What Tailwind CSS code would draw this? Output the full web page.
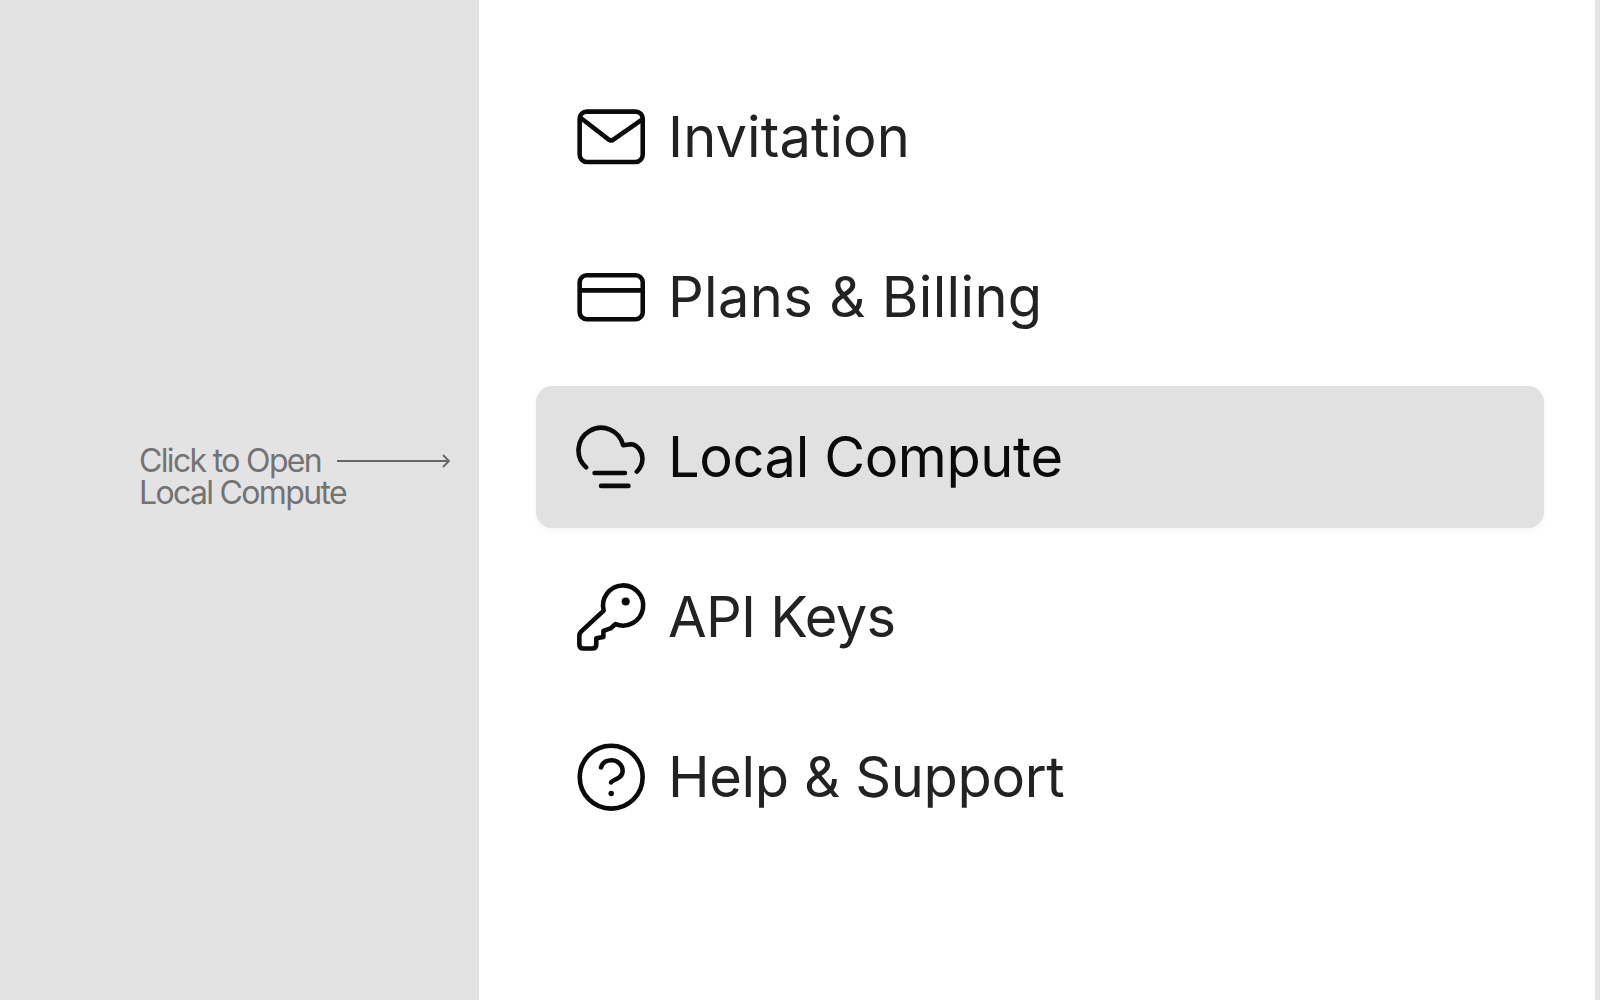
<!DOCTYPE html>
<html lang="en">
<head>
    <meta charset="UTF-8">
    <title>Menu</title>
    <script src="https://cdn.jsdelivr.net/npm/@tailwindcss/browser@4"></script>
</head>
<body class="bg-[#e3e3e3] font-['Inter',sans-serif]">
    <div class="flex h-[1000px] w-[1600px] overflow-hidden">
        <!-- Hint column -->
        <div class="flex w-[479px] shrink-0 items-center pb-[47px] pl-[139px]">
            <div class="text-[32px] leading-[32px] font-normal tracking-[-0.052em] text-[#737373]">
                <div class="flex items-center">
                    <span>Click to Open</span>
                    <svg class="ml-[16px]" width="114" height="16" viewBox="0 0 114 16" fill="none" stroke="#666" stroke-width="1.8"><path d="M0 8H112M106 2l6 6-6 6"/></svg>
                </div>
                <div>Local Compute</div>
            </div>
        </div>

        <!-- Menu -->
        <div class="w-[1116px] shrink-0 bg-white pl-[57px] pr-[51px] pt-[57px] text-[56px] leading-[80px] text-[#222]">
            <div class="flex h-[160px] items-center pl-[40px]">
                <svg class="mr-[21px]" width="71" height="71" viewBox="0 0 70 70" fill="none" stroke="#0a0a0a" stroke-width="4.500" stroke-linecap="round" stroke-linejoin="round"><rect x="3.600" y="9.500" width="62.200" height="49.600" rx="7"/><path d="M5.700 16.500 32 36.800c1.700 1.300 3.500 1.300 5.200 0L64 18"/></svg>
                <span class="tracking-[0.1px]">Invitation</span>
            </div>
            <div class="flex h-[160px] items-center pl-[40px]">
                <svg class="mr-[21px]" width="71" height="71" viewBox="0 0 70 70" fill="none" stroke="#0a0a0a" stroke-width="4.500" stroke-linecap="round" stroke-linejoin="round"><rect x="3.600" y="13" width="62.200" height="43.500" rx="7"/><path d="M4 28h61.500"/></svg>
                <span class="tracking-[0.35px]">Plans &amp; Billing</span>
            </div>
            <div class="my-[9px] flex h-[142px] items-center rounded-[16px] bg-[#e1e1e1] pl-[40px] text-[#0a0a0a] shadow-[0_2px_6px_rgba(0,0,0,0.05)]">
                <svg class="mr-[21px]" width="71" height="71" viewBox="0 0 70 70" fill="none" stroke="#0a0a0a" stroke-width="4.500" stroke-linecap="round" stroke-linejoin="round"><path d="M10 44.700A22.300 22.300 0 1 1 46.500 23L54 22C60 22 65.500 29 65.500 36 65.500 41 63 46 60 49"/><path d="M18.300 50.300h30M24.700 63h27"/></svg>
                <span class="tracking-[-0.4px]">Local Compute</span>
            </div>
            <div class="flex h-[160px] items-center pl-[40px]">
                <svg class="mr-[21px]" width="71" height="71" viewBox="0 1.500 70 70" fill="none" stroke="#0a0a0a" stroke-width="4.500" stroke-linecap="round" stroke-linejoin="round"><path d="M27.300 29.700 5 50.500c-1.200 1.200-1.700 2.300-1.700 4V63c0 2.700 1.500 4 4 4H16c2.700 0 4-1.300 4-4v-6l7-1.300V49.700l7-2.400 5-4.300A19.800 19.800 0 1 0 27.300 29.700Z"/><circle cx="49" cy="20.700" r="4" fill="#0a0a0a" stroke="none"/></svg>
                <span class="tracking-[-0.75px]">API Keys</span>
            </div>
            <div class="flex h-[160px] items-center pl-[40px]">
                <svg class="mr-[21px]" width="71" height="71" viewBox="0 0 70 70" fill="none" stroke="#0a0a0a" stroke-width="4.500" stroke-linecap="round" stroke-linejoin="round"><circle cx="34.700" cy="34.700" r="31"/><path d="M24.700 25C26 20.500 30 18 35 18 41 18 46 22.500 46 28.500 46 33 43 35 40 36.500 37 38 34.500 39 34.500 40"/><circle cx="34.700" cy="50.700" r="2.700" fill="#0a0a0a" stroke="none"/></svg>
                <span class="tracking-[-0.35px]">Help &amp; Support</span>
            </div>
        </div>
    </div>
</body>
</html>
